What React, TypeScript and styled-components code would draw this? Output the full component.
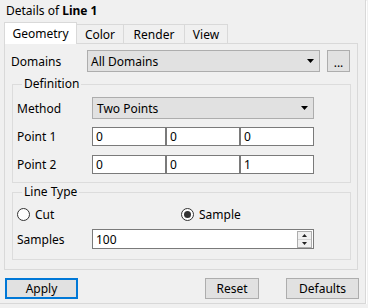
import styled, { createGlobalStyle } from "styled-components";

const GlobalStyle = createGlobalStyle`
    html, body {
        margin: 0;
        background: #f0f0f0;
        font-family: "Segoe UI", "Noto Sans", sans-serif;
        font-size: 12px;
        color: #000;
    }
`;

const Frame = styled.div`
    box-sizing: border-box;
    width: 366px;
    height: 304px;
    border-right: 1px solid #d8d8d8;
    border-bottom: 1px solid #d8d8d8;
    box-shadow: 1px 1px 0 #fff;
    display: flex;
    flex-direction: column;
`;

const Title = styled.div`
    height: 22px;
    line-height: 22px;
    padding-left: 6px;
    white-space: nowrap;

    b {
        font-weight: 700;
    }
`;

const TabStrip = styled.div`
    position: relative;
    z-index: 1;
    display: flex;
    align-items: flex-end;
    height: 21px;
    padding-left: 4px;
`;

const Tab = styled.div<{ $active?: boolean; $w: number }>`
    box-sizing: border-box;
    width: ${(p) => p.$w}px;
    height: ${(p) => (p.$active ? 22 : 19)}px;
    margin-bottom: ${(p) => (p.$active ? -1 : 0)}px;
    border: 1px solid #d9d9d9;
    border-bottom: none;
    border-left: ${(p) => (p.$active ? "1px solid #d9d9d9" : "none")};
    background: ${(p) => (p.$active ? "#fff" : "#f0f0f0")};
    display: flex;
    align-items: center;
    justify-content: center;
    padding-top: ${(p) => (p.$active ? 0 : 1)}px;
    white-space: nowrap;
`;

const Pane = styled.div`
    box-sizing: border-box;
    margin-left: 4px;
    width: 354px;
    height: 227px;
    border: 1px solid #d9d9d9;
    padding: 6px 0 0 6px;
    display: flex;
    flex-direction: column;
`;

const Row = styled.div<{ $top?: number }>`
    display: flex;
    align-items: center;
    margin-top: ${(p) => p.$top ?? 0}px;
`;

const Label = styled.div<{ $w: number }>`
    width: ${(p) => p.$w}px;
    white-space: nowrap;
`;

const Combo = styled.div<{ $w: number }>`
    box-sizing: border-box;
    width: ${(p) => p.$w}px;
    height: 22px;
    background: #e1e1e1;
    border: 1px solid #adadad;
    display: flex;
    align-items: center;
    justify-content: space-between;
    padding: 0 5px 0 3px;
    white-space: nowrap;
`;

const SmallButton = styled.div`
    box-sizing: border-box;
    width: 23px;
    height: 22px;
    margin-left: 7px;
    background: #e1e1e1;
    border: 1px solid #adadad;
    display: flex;
    align-items: center;
    justify-content: center;
    padding-top: 3px;
`;

const Group = styled.fieldset<{ $top: number; $bottom: number }>`
    box-sizing: border-box;
    width: 339px;
    min-width: 0;
    margin: ${(p) => p.$top}px 0 0 1px;
    padding: 5px 0 ${(p) => p.$bottom}px 4px;
    border: 1px solid #dcdcdc;

    legend {
        margin-left: 5px;
        padding: 0 2px;
        line-height: 16px;
    }
`;

const Fields = styled.div`
    display: grid;
    grid-template-columns: repeat(3, 74px);
`;

const TextBox = styled.div<{ $w?: number }>`
    box-sizing: border-box;
    width: ${(p) => (p.$w ? `${p.$w}px` : "auto")};
    height: ${(p) => (p.$w ? 20 : 19)}px;
    background: #fff;
    border: 1px solid #7a7a7a;
    display: flex;
    align-items: center;
    justify-content: space-between;
    padding-left: 3px;
`;

const Spinner = styled.div`
    box-sizing: border-box;
    width: 15px;
    height: 17px;
    margin-right: 1px;
    border: 1px solid #adadad;
    display: flex;
    flex-direction: column;
`;

const SpinHalf = styled.div`
    flex: 1;
    display: flex;
    align-items: center;
    justify-content: center;
    background: #f0f0f0;

    & + & {
        border-top: 1px solid #d4d4d4;
    }
`;

const RadioRow = styled.div`
    display: flex;
    align-items: center;
    height: 16px;
    margin-top: 1px;
`;

const Radio = styled.label<{ $w?: number }>`
    display: flex;
    align-items: center;
    gap: 5px;
    width: ${(p) => (p.$w ? `${p.$w}px` : "auto")};
`;

const Circle = styled.span<{ $on?: boolean }>`
    box-sizing: border-box;
    width: 13px;
    height: 13px;
    border: 1px solid #333;
    border-radius: 50%;
    background: #fff;
    display: flex;
    align-items: center;
    justify-content: center;

    &::after {
        content: "";
        width: 7px;
        height: 7px;
        border-radius: 50%;
        background: ${(p) => (p.$on ? "#333" : "transparent")};
    }
`;

const ButtonBar = styled.div`
    display: flex;
    margin-top: 8px;
    padding: 0 6px 0 5px;
`;

const Button = styled.div<{ $w: number; $focus?: boolean; $left?: number }>`
    box-sizing: border-box;
    width: ${(p) => p.$w}px;
    height: 21px;
    margin-left: ${(p) => p.$left ?? 0}px;
    background: #e1e1e1;
    border: ${(p) => (p.$focus ? "2px solid #0078d7" : "1px solid #adadad")};
    display: flex;
    align-items: center;
    justify-content: center;
`;

const Arrow = ({ up }: { up?: boolean }) => (
    <svg width="7" height="4" viewBox="0 0 7 4">
        <path d={up ? "M0 4H7L3.5 0Z" : "M0 0H7L3.5 4Z"} fill="#000" />
    </svg>
);

const SpinArrow = ({ up }: { up?: boolean }) => (
    <svg width="5" height="3" viewBox="0 0 5 3">
        <path d={up ? "M0 3H5L2.5 0Z" : "M0 0H5L2.5 3Z"} fill="#222" />
    </svg>
);

export default function App() {
    return (
        <>
            <GlobalStyle />
            <Frame>
                <Title>
                    Details of <b>Line 1</b>
                </Title>
                <TabStrip>
                    <Tab $active $w={73}>Geometry</Tab>
                    <Tab $w={47}>Color</Tab>
                    <Tab $w={61}>Render</Tab>
                    <Tab $w={43}>View</Tab>
                </TabStrip>
                <Pane>
                    <Row>
                        <Label $w={76}>Domains</Label>
                        <Combo $w={233}>
                            All Domains
                            <Arrow />
                        </Combo>
                        <SmallButton>...</SmallButton>
                    </Row>

                    <Group $top={4} $bottom={8}>
                        <legend>Definition</legend>
                        <Row>
                            <Label $w={75}>Method</Label>
                            <Combo $w={222}>
                                <span style={{ paddingLeft: 1 }}>Two Points</span>
                                <Arrow />
                            </Combo>
                        </Row>
                        <Row $top={8}>
                            <Label $w={75}>Point 1</Label>
                            <Fields>
                                <TextBox>0</TextBox>
                                <TextBox>0</TextBox>
                                <TextBox>0</TextBox>
                            </Fields>
                        </Row>
                        <Row $top={9}>
                            <Label $w={75}>Point 2</Label>
                            <Fields>
                                <TextBox>0</TextBox>
                                <TextBox>0</TextBox>
                                <TextBox>1</TextBox>
                            </Fields>
                        </Row>
                    </Group>

                    <Group $top={1} $bottom={10}>
                        <legend>Line Type</legend>
                        <RadioRow>
                            <Radio $w={164}>
                                <Circle />
                                Cut
                            </Radio>
                            <Radio>
                                <Circle $on />
                                Sample
                            </Radio>
                        </RadioRow>
                        <Row $top={7}>
                            <Label $w={75}>Samples</Label>
                            <TextBox $w={222}>
                                100
                                <Spinner>
                                    <SpinHalf>
                                        <SpinArrow up />
                                    </SpinHalf>
                                    <SpinHalf>
                                        <SpinArrow />
                                    </SpinHalf>
                                </Spinner>
                            </TextBox>
                        </Row>
                    </Group>
                </Pane>
                <ButtonBar>
                    <Button $w={73} $focus>Apply</Button>
                    <Button $w={54} $left={127}>Reset</Button>
                    <Button $w={73} $left={27}>Defaults</Button>
                </ButtonBar>
            </Frame>
        </>
    );
}
